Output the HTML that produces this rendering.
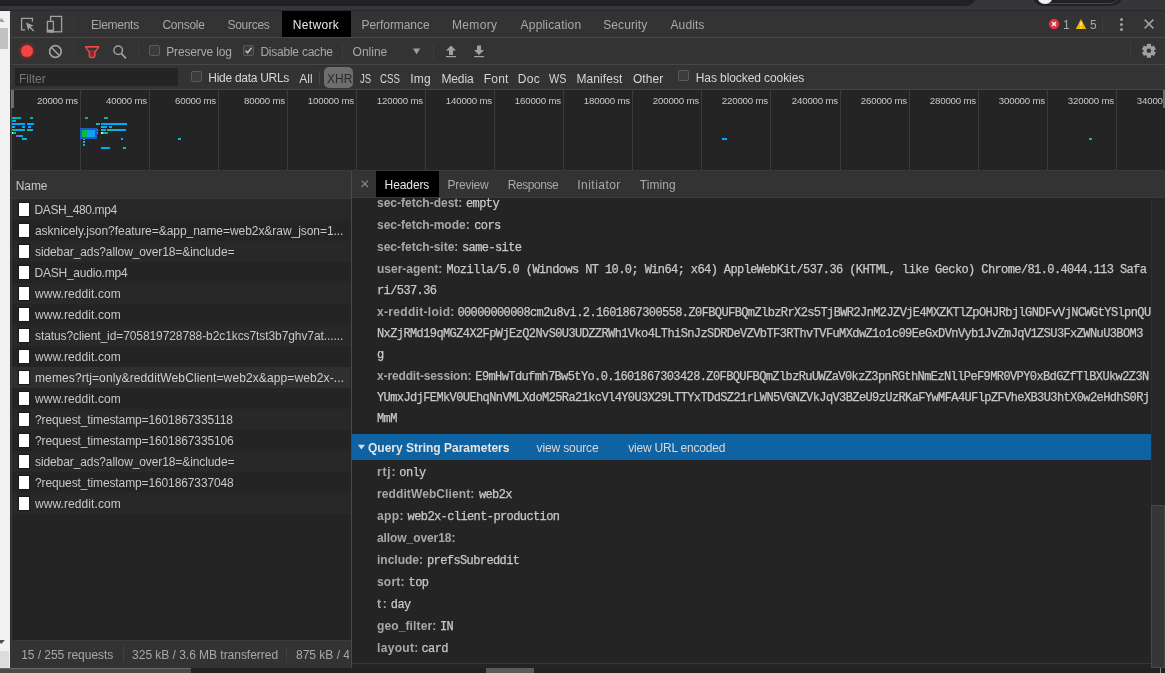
<!DOCTYPE html>
<html><head><meta charset="utf-8">
<style>
*{box-sizing:border-box;margin:0;padding:0}
html,body{width:1165px;height:673px;overflow:hidden;background:#333;font-family:"Liberation Sans",sans-serif;font-size:12px;color:#a8a8a8}
.a{position:absolute}
.t{position:absolute;white-space:nowrap;line-height:16px}
.mono{font-family:"Liberation Mono",monospace;letter-spacing:-0.6px;-webkit-text-stroke:0.25px #c8c8c8}
.ovl{text-align:right;font-size:9.7px;letter-spacing:-0.2px;color:#c8c8c8}
.hd{color:#c8c8c8}.hd b{color:#a8a8a8}
</style></head><body><div id="root" style="position:absolute;left:0;top:0;width:1165px;height:673px;overflow:hidden;background:#333;will-change:transform">
<!-- top strip -->
<div class="a" style="left:0;top:0;width:1165px;height:10px;background:#35363a"></div>
<div class="a" style="left:-20px;top:-10px;width:996px;height:15.5px;background:#202124;border-radius:0 0 10px 0"></div>
<div class="a" style="left:1033px;top:-15px;width:89px;height:20.5px;background:#202124;border-radius:10px"></div>
<div class="a" style="left:1039px;top:-15px;width:80px;height:18.5px;border:1px solid #44454a;border-radius:9px"></div>
<div class="a" style="left:1036.5px;top:-12.5px;width:16px;height:16px;background:#f1f1f1;border-radius:50%"></div>
<div class="a" style="left:0;top:10px;width:1165px;height:1px;background:#28292b"></div>

<!-- left page scrollbar -->
<div class="a" style="left:0;top:11px;width:10px;height:657px;background:#f1f1f1"></div>
<div class="a" style="left:0;top:28px;width:8px;height:21px;background:#c1c1c1"></div>
<svg class="a" style="left:0;top:11px" width="10" height="657"><polygon points="-2.3,11 1.3,7 4.9,11" fill="#a3a3a3"/><polygon points="-2.3,629 1.3,633 4.9,629" fill="#505050"/><rect x="0" y="640" width="9" height="17" fill="#dcdcdc"/></svg>
<div class="a" style="left:10px;top:11px;width:1px;height:657px;background:#2e2e2e"></div>
<div class="a" style="left:11px;top:11px;width:1px;height:657px;background:#393939"></div>

<!-- bottom page scrollbar -->
<div class="a" style="left:0;top:668px;width:1165px;height:5px;background:#4a4a4a;border-top:1px solid #6a6a6a"></div>


<!-- devtools main tab bar -->
<div class="a" style="left:11px;top:37px;width:1154px;height:1px;background:#474747"></div>
<svg class="a" style="left:11px;top:11px" width="80" height="26">
 <path d="M14.2,18.8 H10.6 V7.4 H21.4 V10.8" fill="none" stroke="#a0a0a0" stroke-width="1.3"/>
 <path d="M15,11.6 L22.6,14.4 L19.6,15.8 L23.2,19.4 L22.2,20.4 L18.6,16.8 L17.2,19.6 Z" fill="#a0a0a0"/>
 <rect x="39.6" y="5.4" width="11" height="15.4" fill="none" stroke="#a0a0a0" stroke-width="1.3"/>
 <rect x="36.4" y="10.4" width="6" height="10.4" fill="#333" stroke="#a0a0a0" stroke-width="1.3"/>
 <rect x="35.8" y="18.6" width="7.2" height="2.8" fill="#a0a0a0"/>
 <rect x="62.2" y="5" width="1" height="16" fill="#3e3e3e"/>
</svg>
<div class="t" style="left:91.0px;top:17px;letter-spacing:-0.27px">Elements</div>
<div class="t" style="left:162.4px;top:17px;letter-spacing:-0.25px">Console</div>
<div class="t" style="left:227.5px;top:17px;letter-spacing:-0.28px">Sources</div>
<div class="a" style="left:282px;top:11px;width:69px;height:26px;background:#000"></div>
<div class="t" style="left:292.7px;top:17px;color:#e8e8e8;letter-spacing:0.35px">Network</div>
<div class="t" style="left:361.5px;top:17px;letter-spacing:-0.06px">Performance</div>
<div class="t" style="left:451.9px;top:17px;letter-spacing:0.36px">Memory</div>
<div class="t" style="left:520.6px;top:17px;letter-spacing:0.18px">Application</div>
<div class="t" style="left:603.3px;top:17px;letter-spacing:0.07px">Security</div>
<div class="t" style="left:670.5px;top:17px;letter-spacing:0.10px">Audits</div>
<svg class="a" style="left:1040px;top:11px" width="125" height="26">
 <circle cx="14" cy="13" r="5.2" fill="#e0313f"/>
 <path d="M12,11 L16,15 M16,11 L12,15" stroke="#fff" stroke-width="1.2"/>
 <path d="M41,8 L46.2,18 L35.8,18 Z" fill="#f2b600"/>
 <rect x="40.5" y="11.2" width="1.1" height="3.8" fill="#fff"/><rect x="40.5" y="16" width="1.1" height="1.1" fill="#fff"/>
 <rect x="62" y="5" width="1" height="16" fill="#3e3e3e"/>
 <circle cx="81.5" cy="8.6" r="1.5" fill="#a0a0a0"/><circle cx="81.5" cy="13.5" r="1.5" fill="#a0a0a0"/><circle cx="81.5" cy="18.4" r="1.5" fill="#a0a0a0"/>
 <path d="M104.6,8.6 L113.4,17.4 M113.4,8.6 L104.6,17.4" stroke="#a0a0a0" stroke-width="1.5"/>
</svg>
<div class="t" style="left:1063px;top:17px">1</div>
<div class="t" style="left:1090px;top:17px">5</div>

<!-- second toolbar -->
<div class="a" style="left:11px;top:64px;width:1154px;height:1px;background:#474747"></div>
<svg class="a" style="left:11px;top:38px" width="140" height="26">
 <defs><filter id="gl" x="-1" y="-1" width="3" height="3"><feGaussianBlur stdDeviation="1.5"/></filter></defs><circle cx="16" cy="13" r="7.6" fill="#b02020" opacity="0.6" filter="url(#gl)"/>
 <circle cx="16" cy="13" r="6" fill="#f44545"/>
 <circle cx="44.4" cy="13.5" r="5.8" fill="none" stroke="#a0a0a0" stroke-width="1.7"/>
 <path d="M40.4,9.5 L48.4,17.5" stroke="#a0a0a0" stroke-width="1.7"/>
 <rect x="62.2" y="5" width="1" height="16" fill="#3e3e3e"/>
 <path d="M74.6,8.8 H87.6 L83.8,14.4 V18.2 Q83.8,19.6 82.4,19.6 H79.8 Q78.4,19.6 78.4,18.2 V14.4 Z" fill="#7e3030" stroke="#f24848" stroke-width="1.5" stroke-linejoin="round"/>
 <path d="M76.2,10 H86 L84.4,12 H77.8 Z" fill="#333"/>
 <circle cx="107.2" cy="12.2" r="4.3" fill="none" stroke="#a0a0a0" stroke-width="1.5"/>
 <path d="M110.4,15.7 L115,20.3" stroke="#a0a0a0" stroke-width="1.8"/>
 <rect x="127.2" y="5" width="1" height="16" fill="#3e3e3e"/>
</svg>
<div class="a" style="left:149px;top:45px;width:11px;height:11px;border:1px solid #5a5a5a;border-radius:2px;background:#3b3b3b"></div>
<div class="t" style="left:166.2px;top:44px;letter-spacing:-0.14px">Preserve log</div>
<div class="a" style="left:243px;top:45px;width:11px;height:11px;border:1px solid #5a5a5a;border-radius:2px;background:#3b3b3b"></div>
<svg class="a" style="left:243px;top:45px" width="11" height="11"><path d="M2.6,5.6 L4.6,7.8 L8.6,2.8" fill="none" stroke="#b8b8b8" stroke-width="1.6"/></svg>
<div class="t" style="left:260.4px;top:44px;letter-spacing:-0.23px">Disable cache</div>
<div class="a" style="left:342px;top:43px;width:1px;height:16px;background:#3e3e3e"></div>
<div class="t" style="left:352.6px;top:44px;letter-spacing:0.00px">Online</div>
<svg class="a" style="left:412px;top:47px" width="10" height="8"><path d="M1,1.4 H8.2 L4.6,7.2 Z" fill="#a0a0a0"/></svg>
<div class="a" style="left:433px;top:43px;width:1px;height:16px;background:#3e3e3e"></div>
<svg class="a" style="left:440px;top:40px" width="50" height="22">
 <path d="M11,5.5 L16,10.5 H13 V15 H9 V10.5 H6 Z" fill="#a0a0a0"/><rect x="6" y="16" width="10" height="1.2" fill="#a0a0a0"/>
 <path d="M39,15 L34,10 H37 V5.5 H41 V10 H44 Z" fill="#a0a0a0"/><rect x="34" y="16" width="10" height="1.2" fill="#a0a0a0"/>
</svg>
<div class="a" style="left:1130px;top:43px;width:1px;height:16px;background:#3e3e3e"></div>
<svg class="a" style="left:1140px;top:42px" width="18" height="18">
 <g transform="translate(8.9,8.8)" fill="#a0a0a0">
  <circle r="5.3"/>
  <rect x="-2.1" y="-6.9" width="4.2" height="13.8"/>
  <rect x="-2.1" y="-6.9" width="4.2" height="13.8" transform="rotate(60)"/>
  <rect x="-2.1" y="-6.9" width="4.2" height="13.8" transform="rotate(120)"/>
  <circle r="2.3" fill="#333"/>
 </g>
</svg>

<!-- filter bar -->
<div class="a" style="left:11px;top:89px;width:1154px;height:1px;background:#474747"></div>
<div class="a" style="left:15px;top:68px;width:163px;height:18px;background:#242424"></div>
<div class="t" style="left:19px;top:71px;color:#777">Filter</div>
<div class="a" style="left:191px;top:71px;width:11px;height:11px;border:1px solid #5a5a5a;border-radius:2px;background:#3b3b3b"></div>
<div class="t" style="left:208.3px;top:70px;color:#d6d6d6;letter-spacing:-0.28px">Hide data URLs</div>
<div class="t" style="left:299.3px;top:71px;color:#d6d6d6;letter-spacing:0.00px">All</div>
<div class="a" style="left:319px;top:71px;width:1px;height:14px;background:#454545"></div>
<div class="a" style="left:324px;top:67px;width:29px;height:21px;background:#6e6e6e;border-radius:5px"></div>
<div class="t" style="left:327px;top:71px;color:#2a2a2a">XHR</div>
<div class="t" style="left:359.5px;top:71px;color:#d6d6d6;transform:scaleX(0.8);transform-origin:0 0">JS</div>
<div class="t" style="left:380.3px;top:71px;color:#d6d6d6;transform:scaleX(0.81);transform-origin:0 0">CSS</div>
<div class="t" style="left:410.2px;top:71px;color:#d6d6d6;letter-spacing:0.25px">Img</div>
<div class="t" style="left:441.4px;top:71px;color:#d6d6d6;letter-spacing:-0.10px">Media</div>
<div class="t" style="left:483.8px;top:71px;color:#d6d6d6;letter-spacing:0.17px">Font</div>
<div class="t" style="left:517.7px;top:71px;color:#d6d6d6;letter-spacing:0.30px">Doc</div>
<div class="t" style="left:548.7px;top:71px;color:#d6d6d6;transform:scaleX(0.9);transform-origin:0 0">WS</div>
<div class="t" style="left:576.4px;top:71px;color:#d6d6d6;letter-spacing:0.10px">Manifest</div>
<div class="t" style="left:632.9px;top:71px;color:#d6d6d6;letter-spacing:0.08px">Other</div>
<div class="a" style="left:678px;top:70px;width:11px;height:11px;border:1px solid #5a5a5a;border-radius:2px;background:#3b3b3b"></div>
<div class="t" style="left:695.8px;top:70px;color:#d6d6d6;letter-spacing:-0.09px">Has blocked cookies</div>

<!-- overview -->
<div class="a" style="left:12px;top:90px;width:1153px;height:80px;background:#242424;overflow:hidden">
<div class="a" style="left:68px;top:0;width:1px;height:80px;background:#3a3a3a"></div>
<div class="t ovl" style="left:-2px;top:3px;width:68px">20000 ms</div>
<div class="a" style="left:137px;top:0;width:1px;height:80px;background:#3a3a3a"></div>
<div class="t ovl" style="left:67px;top:3px;width:68px">40000 ms</div>
<div class="a" style="left:206px;top:0;width:1px;height:80px;background:#3a3a3a"></div>
<div class="t ovl" style="left:136px;top:3px;width:68px">60000 ms</div>
<div class="a" style="left:275px;top:0;width:1px;height:80px;background:#3a3a3a"></div>
<div class="t ovl" style="left:205px;top:3px;width:68px">80000 ms</div>
<div class="a" style="left:344px;top:0;width:1px;height:80px;background:#3a3a3a"></div>
<div class="t ovl" style="left:274px;top:3px;width:68px">100000 ms</div>
<div class="a" style="left:413px;top:0;width:1px;height:80px;background:#3a3a3a"></div>
<div class="t ovl" style="left:343px;top:3px;width:68px">120000 ms</div>
<div class="a" style="left:482px;top:0;width:1px;height:80px;background:#3a3a3a"></div>
<div class="t ovl" style="left:412px;top:3px;width:68px">140000 ms</div>
<div class="a" style="left:551px;top:0;width:1px;height:80px;background:#3a3a3a"></div>
<div class="t ovl" style="left:481px;top:3px;width:68px">160000 ms</div>
<div class="a" style="left:620px;top:0;width:1px;height:80px;background:#3a3a3a"></div>
<div class="t ovl" style="left:550px;top:3px;width:68px">180000 ms</div>
<div class="a" style="left:689px;top:0;width:1px;height:80px;background:#3a3a3a"></div>
<div class="t ovl" style="left:619px;top:3px;width:68px">200000 ms</div>
<div class="a" style="left:758px;top:0;width:1px;height:80px;background:#3a3a3a"></div>
<div class="t ovl" style="left:688px;top:3px;width:68px">220000 ms</div>
<div class="a" style="left:828px;top:0;width:1px;height:80px;background:#3a3a3a"></div>
<div class="t ovl" style="left:758px;top:3px;width:68px">240000 ms</div>
<div class="a" style="left:897px;top:0;width:1px;height:80px;background:#3a3a3a"></div>
<div class="t ovl" style="left:827px;top:3px;width:68px">260000 ms</div>
<div class="a" style="left:966px;top:0;width:1px;height:80px;background:#3a3a3a"></div>
<div class="t ovl" style="left:896px;top:3px;width:68px">280000 ms</div>
<div class="a" style="left:1035px;top:0;width:1px;height:80px;background:#3a3a3a"></div>
<div class="t ovl" style="left:965px;top:3px;width:68px">300000 ms</div>
<div class="a" style="left:1104px;top:0;width:1px;height:80px;background:#3a3a3a"></div>
<div class="t ovl" style="left:1034px;top:3px;width:68px">320000 ms</div>
<div class="a" style="left:0px;top:27px;width:9px;height:2px;background:linear-gradient(90deg,#00c060,#00b0e0,#00c060,#00a8f0)"></div>
<div class="a" style="left:18px;top:27px;width:3px;height:2px;background:linear-gradient(90deg,#00c060,#00b0e0,#00c060,#00a8f0)"></div>
<div class="a" style="left:0px;top:30px;width:4px;height:2px;background:#00a8ff"></div>
<div class="a" style="left:0px;top:33px;width:13px;height:2px;background:#00a8ff"></div>
<div class="a" style="left:15px;top:33px;width:7px;height:2px;background:#00a8ff"></div>
<div class="a" style="left:0px;top:36px;width:3px;height:2px;background:linear-gradient(90deg,#20c0a0,#00a8ff)"></div>
<div class="a" style="left:10px;top:36px;width:3px;height:2px;background:#00a8ff"></div>
<div class="a" style="left:16px;top:36px;width:3px;height:2px;background:#00a8ff"></div>
<div class="a" style="left:0px;top:39px;width:13px;height:2px;background:linear-gradient(90deg,#00c060,#00a8ff 40%,#00b8d0)"></div>
<div class="a" style="left:15px;top:39px;width:6px;height:2px;background:linear-gradient(90deg,#20c0a0,#00a8ff)"></div>
<div class="a" style="left:0px;top:42px;width:4px;height:2px;background:linear-gradient(90deg,#e0e0e0 20%,#00c060 40%,#00b0e0)"></div>
<div class="a" style="left:4px;top:45px;width:7px;height:2px;background:linear-gradient(90deg,#808080,#a040e0 25%,#00a8ff 50%)"></div>
<div class="a" style="left:10px;top:48px;width:5px;height:2px;background:linear-gradient(90deg,#20c0a0,#00a8ff)"></div>
<div class="a" style="left:73px;top:27px;width:3px;height:2px;background:linear-gradient(90deg,#00c060,#00b0e0,#00c060,#00a8f0)"></div>
<div class="a" style="left:92px;top:27px;width:4px;height:2px;background:linear-gradient(90deg,#00c060,#00b0e0,#00c060,#00a8f0)"></div>
<div class="a" style="left:84px;top:33px;width:4px;height:2px;background:linear-gradient(90deg,#20c0a0,#00a8ff)"></div>
<div class="a" style="left:89px;top:33px;width:26px;height:2px;background:#00a8ff"></div>
<div class="a" style="left:89px;top:36px;width:6px;height:2px;background:linear-gradient(90deg,#20c0a0,#00a8ff)"></div>
<div class="a" style="left:97px;top:36px;width:3px;height:2px;background:#00a8ff"></div>
<div class="a" style="left:84px;top:39px;width:2px;height:2px;background:linear-gradient(90deg,#20c0a0,#00a8ff)"></div>
<div class="a" style="left:89px;top:39px;width:5px;height:2px;background:#00a8ff"></div>
<div class="a" style="left:95px;top:39px;width:19px;height:2px;background:linear-gradient(90deg,#20c0a0,#00a8ff)"></div>
<div class="a" style="left:84px;top:42px;width:2px;height:2px;background:linear-gradient(90deg,#20c0a0,#00a8ff)"></div>
<div class="a" style="left:89px;top:42px;width:7px;height:2px;background:linear-gradient(90deg,#e0e0e0 20%,#00c060 40%,#00b0e0)"></div>
<div class="a" style="left:71px;top:48px;width:2px;height:2px;background:linear-gradient(90deg,#20c0a0,#00a8ff)"></div>
<div class="a" style="left:71px;top:51px;width:2px;height:2px;background:linear-gradient(90deg,#20c0a0,#00a8ff)"></div>
<div class="a" style="left:71px;top:54px;width:2px;height:2px;background:linear-gradient(90deg,#20c0a0,#00a8ff)"></div>
<div class="a" style="left:109px;top:48px;width:2px;height:2px;background:linear-gradient(90deg,#20c0a0,#00a8ff)"></div>
<div class="a" style="left:89px;top:57px;width:9px;height:2px;background:#00a8ff"></div>
<div class="a" style="left:111px;top:57px;width:3px;height:2px;background:linear-gradient(90deg,#20c0a0,#00a8ff)"></div>
<div class="a" style="left:166px;top:48px;width:3px;height:2px;background:linear-gradient(90deg,#20c0a0,#00a8ff)"></div>
<div class="a" style="left:710px;top:48px;width:5px;height:2px;background:#00a8ff"></div>
<div class="a" style="left:1077px;top:48px;width:3px;height:2px;background:linear-gradient(90deg,#20c0a0,#00a8ff)"></div>
<div class="t ovl" style="left:1103px;top:3px;width:68px">340000 ms</div>
<div class="a" style="left:68px;top:38px;width:17px;height:11px;background:#1e5ccc"></div>
<div class="a" style="left:70px;top:40px;width:13px;height:7px;background:linear-gradient(90deg,#00c040 40%,#10a0f0 40%)"></div>

<div class="a" style="left:0;top:0;width:1.5px;height:18px;background:#6a6a6a"></div>
<div class="a" style="left:1151px;top:0;width:2px;height:18px;background:#6a6a6a"></div>
</div>
<div class="a" style="left:12px;top:170px;width:1153px;height:1px;background:#3a3a3a"></div>
<div class="a" style="left:11px;top:90px;width:1px;height:80px;background:#4a4a4a"></div>
<div class="a" style="left:11px;top:90px;width:1px;height:18px;background:#777"></div>
<!-- request list -->
<div class="a" style="left:12px;top:171px;width:339px;height:27px;background:#333"></div>
<div class="t" style="left:15.8px;top:178px;color:#c8c8c8;letter-spacing:-0.10px">Name</div>
<div class="a" style="left:12px;top:198px;width:339px;height:1px;background:#3a3a3a"></div>
<div class="a" style="left:12px;top:199px;width:339px;height:441px;background:#242424"></div>
<div class="a" style="left:12px;top:199px;width:339px;height:315px;background:#282828"></div>
<div class="a" style="left:18px;top:202px;width:12px;height:15px;background:#fff;border:1px solid #1a1a1a"></div>
<div class="t" style="left:34.5px;top:202px;color:#c8c8c8;letter-spacing:-0.37px">DASH_480.mp4</div>
<div class="a" style="left:12px;top:220px;width:339px;height:21px;background:#242424"></div>
<div class="a" style="left:18px;top:223px;width:12px;height:15px;background:#fff;border:1px solid #1a1a1a"></div>
<div class="t" style="left:35.0px;top:223px;color:#c8c8c8;letter-spacing:-0.05px">asknicely.json?feature=&amp;app_name=web2x&amp;raw_json=1...</div>
<div class="a" style="left:18px;top:244px;width:12px;height:15px;background:#fff;border:1px solid #1a1a1a"></div>
<div class="t" style="left:35.0px;top:244px;color:#c8c8c8;letter-spacing:-0.10px">sidebar_ads?allow_over18=&amp;include=</div>
<div class="a" style="left:12px;top:262px;width:339px;height:21px;background:#242424"></div>
<div class="a" style="left:18px;top:265px;width:12px;height:15px;background:#fff;border:1px solid #1a1a1a"></div>
<div class="t" style="left:34.5px;top:265px;color:#c8c8c8;letter-spacing:-0.23px">DASH_audio.mp4</div>
<div class="a" style="left:18px;top:286px;width:12px;height:15px;background:#fff;border:1px solid #1a1a1a"></div>
<div class="t" style="left:35.0px;top:286px;color:#c8c8c8;letter-spacing:0.08px">www.reddit.com</div>
<div class="a" style="left:12px;top:304px;width:339px;height:21px;background:#242424"></div>
<div class="a" style="left:18px;top:307px;width:12px;height:15px;background:#fff;border:1px solid #1a1a1a"></div>
<div class="t" style="left:35.0px;top:307px;color:#c8c8c8;letter-spacing:0.08px">www.reddit.com</div>
<div class="a" style="left:18px;top:328px;width:12px;height:15px;background:#fff;border:1px solid #1a1a1a"></div>
<div class="t" style="left:35.0px;top:328px;color:#c8c8c8;letter-spacing:-0.09px">status?client_id=705819728788-b2c1kcs7tst3b7ghv7at......</div>
<div class="a" style="left:12px;top:346px;width:339px;height:21px;background:#242424"></div>
<div class="a" style="left:18px;top:349px;width:12px;height:15px;background:#fff;border:1px solid #1a1a1a"></div>
<div class="t" style="left:35.0px;top:349px;color:#c8c8c8;letter-spacing:0.08px">www.reddit.com</div>
<div class="a" style="left:18px;top:370px;width:12px;height:15px;background:#fff;border:1px solid #1a1a1a"></div>
<div class="a" style="left:12px;top:367px;width:338px;height:21px;background:#2f2f2f"></div>
<div class="a" style="left:18px;top:370px;width:12px;height:15px;background:#fff;border:1px solid #1a1a1a"></div>
<div class="t" style="left:35.0px;top:370px;color:#d0d0d0;letter-spacing:0.11px">memes?rtj=only&amp;redditWebClient=web2x&amp;app=web2x-...</div>
<div class="a" style="left:12px;top:388px;width:339px;height:21px;background:#242424"></div>
<div class="a" style="left:18px;top:391px;width:12px;height:15px;background:#fff;border:1px solid #1a1a1a"></div>
<div class="t" style="left:35.0px;top:391px;color:#c8c8c8;letter-spacing:0.08px">www.reddit.com</div>
<div class="a" style="left:18px;top:412px;width:12px;height:15px;background:#fff;border:1px solid #1a1a1a"></div>
<div class="t" style="left:35.0px;top:412px;color:#c8c8c8;letter-spacing:-0.12px">?request_timestamp=1601867335118</div>
<div class="a" style="left:12px;top:430px;width:339px;height:21px;background:#242424"></div>
<div class="a" style="left:18px;top:433px;width:12px;height:15px;background:#fff;border:1px solid #1a1a1a"></div>
<div class="t" style="left:35.0px;top:433px;color:#c8c8c8;letter-spacing:-0.12px">?request_timestamp=1601867335106</div>
<div class="a" style="left:18px;top:454px;width:12px;height:15px;background:#fff;border:1px solid #1a1a1a"></div>
<div class="t" style="left:35.0px;top:454px;color:#c8c8c8;letter-spacing:-0.10px">sidebar_ads?allow_over18=&amp;include=</div>
<div class="a" style="left:12px;top:472px;width:339px;height:21px;background:#242424"></div>
<div class="a" style="left:18px;top:475px;width:12px;height:15px;background:#fff;border:1px solid #1a1a1a"></div>
<div class="t" style="left:35.0px;top:475px;color:#c8c8c8;letter-spacing:-0.12px">?request_timestamp=1601867337048</div>
<div class="a" style="left:18px;top:496px;width:12px;height:15px;background:#fff;border:1px solid #1a1a1a"></div>
<div class="t" style="left:35.0px;top:496px;color:#c8c8c8;letter-spacing:0.08px">www.reddit.com</div>
<!-- status bar -->
<div class="a" style="left:12px;top:640px;width:339px;height:28px;background:#333;border-top:1px solid #3a3a3a"></div>
<div class="t" style="left:21.2px;top:647px;letter-spacing:-0.04px">15 / 255 requests</div>
<div class="a" style="left:123px;top:646px;width:1px;height:16px;background:#404040"></div>
<div class="t" style="left:132.1px;top:647px;letter-spacing:-0.03px">325 kB / 3.6 MB transferred</div>
<div class="a" style="left:286px;top:646px;width:1px;height:16px;background:#404040"></div>
<div class="t" style="left:296px;top:647px;width:53px;overflow:hidden">875 kB / 4.0 MB resources</div>
<div class="a" style="left:351px;top:171px;width:1px;height:497px;background:#4a4a4a"></div>
<!-- details -->
<div class="a" style="left:352px;top:171px;width:813px;height:26px;background:#333"></div>
<div class="a" style="left:352px;top:197px;width:813px;height:1px;background:#3a3a3a"></div>
<svg class="a" style="left:359px;top:178px" width="12" height="12"><path d="M2.6,2.6 L9,9 M9,2.6 L2.6,9" stroke="#8a8a8a" stroke-width="1.1"/></svg>
<div class="a" style="left:376px;top:171px;width:63px;height:26px;background:#000"></div>
<div class="t" style="left:384.6px;top:177px;color:#e8e8e8;letter-spacing:-0.10px">Headers</div>
<div class="t" style="left:447.5px;top:177px;letter-spacing:-0.25px">Preview</div>
<div class="t" style="left:507.8px;top:177px;letter-spacing:-0.46px">Response</div>
<div class="t" style="left:577.3px;top:177px;letter-spacing:0.46px">Initiator</div>
<div class="t" style="left:639.7px;top:177px;letter-spacing:0.10px">Timing</div>
<div class="a" style="left:352px;top:198px;width:799px;height:465px;background:#242424;overflow:hidden">
<div class="t hd" style="left:25px;top:-3px"><b>sec-fetch-dest:</b></div><div class="t hd" style="left:114px;top:-3px"><span class="mono">empty</span></div>
<div class="t hd" style="left:25px;top:19px"><b>sec-fetch-mode:</b></div><div class="t hd" style="left:122.19999999999999px;top:19px"><span class="mono">cors</span></div>
<div class="t hd" style="left:25px;top:41px"><b>sec-fetch-site:</b></div><div class="t hd" style="left:110px;top:41px"><span class="mono">same-site</span></div>
<div class="t hd" style="left:25px;top:63px"><b>user-agent:</b></div><div class="t hd" style="left:94.60000000000002px;top:63px"><span class="mono">Mozilla/5.0 (Windows NT 10.0; Win64; x64) AppleWebKit/537.36 (KHTML, like Gecko) Chrome/81.0.4044.113 Safa</span></div>
<div class="t hd" style="left:25px;top:84px"><span class="mono">ri/537.36</span></div>
<div class="t hd" style="left:25px;top:106px"><b style="letter-spacing:0.308px">x-reddit-loid:</b></div><div class="t hd" style="left:105.39999999999998px;top:106px"><span class="mono">00000000008cm2u8vi.2.1601867300558.Z0FBQUFBQmZlbzRrX2s5TjBWR2JnM2JZVjE4MXZKTlZpOHJRbjlGNDFvVjNCWGtYSlpnQU</span></div>
<div class="t hd" style="left:25px;top:127px"><span class="mono">NxZjRMd19qMGZ4X2FpWjEzQ2NvS0U3UDZZRWh1Vko4LThiSnJzSDRDeVZVbTF3RThvTVFuMXdwZ1o1c09EeGxDVnVyb1JvZmJqV1ZSU3FxZWNuU3BOM3</span></div>
<div class="t hd" style="left:25px;top:148px"><span class="mono">g</span></div>
<div class="t hd" style="left:25px;top:170px"><b style="letter-spacing:-0.137px">x-reddit-session:</b></div><div class="t hd" style="left:123.30000000000001px;top:170px"><span class="mono">E9mHwTdufmh7Bw5tYo.0.1601867303428.Z0FBQUFBQmZlbzRuUWZaV0kzZ3pnRGthNmEzNllPeF9MR0VPY0xBdGZfTlBXUkw2Z3N</span></div>
<div class="t hd" style="left:25px;top:191px"><span class="mono">YUmxJdjFEMkV0UEhqNnVMLXdoM25Ra21kcVl4Y0U3X29LTTYxTDdSZ21rLWN5VGNZVkJqV3BZeU9zUzRKaFYwMFA4UFlpZFVheXB3U3htX0w2eHdhS0Rj</span></div>
<div class="t hd" style="left:25px;top:212px"><span class="mono">MmM</span></div>
<div class="a" style="left:0;top:236px;width:799px;height:26px;background:#1063a3"></div>
<svg class="a" style="left:5px;top:246px" width="10" height="8"><path d="M0.8,0.8 H8 L4.4,5.6 Z" fill="#dcdcdc"/></svg>
<div class="t" style="left:16px;top:242px;color:#e4e4e4;font-weight:bold">Query String Parameters</div>
<div class="t" style="left:184.6px;top:242px;color:#d8d8d8;letter-spacing:-0.14px">view source</div>
<div class="t" style="left:276.2px;top:242px;color:#d8d8d8;letter-spacing:-0.21px">view URL encoded</div>
<div class="t hd" style="left:25px;top:266px"><b style="letter-spacing:0.800px">rtj:</b></div><div class="t hd" style="left:47.30000000000001px;top:266px"><span class="mono">only</span></div>
<div class="t hd" style="left:25px;top:288px"><b style="letter-spacing:0.100px">redditWebClient:</b></div><div class="t hd" style="left:126.89999999999998px;top:288px"><span class="mono">web2x</span></div>
<div class="t hd" style="left:25px;top:310px"><b style="letter-spacing:0.367px">app:</b></div><div class="t hd" style="left:55.60000000000002px;top:310px"><span class="mono">web2x-client-production</span></div>
<div class="t hd" style="left:25px;top:332px"><b style="letter-spacing:-0.083px">allow_over18:</b></div>
<div class="t hd" style="left:25px;top:354px"><b>include:</b></div><div class="t hd" style="left:75px;top:354px"><span class="mono">prefsSubreddit</span></div>
<div class="t hd" style="left:25px;top:376px"><b style="letter-spacing:0.200px">sort:</b></div><div class="t hd" style="left:56.60000000000002px;top:376px"><span class="mono">top</span></div>
<div class="t hd" style="left:25px;top:398px"><b style="letter-spacing:1.800px">t:</b></div><div class="t hd" style="left:38.80000000000001px;top:398px"><span class="mono">day</span></div>
<div class="t hd" style="left:25px;top:420px"><b style="letter-spacing:0.120px">geo_filter:</b></div><div class="t hd" style="left:88px;top:420px"><span class="mono">IN</span></div>
<div class="t hd" style="left:25px;top:442px"><b style="letter-spacing:0.317px">layout:</b></div><div class="t hd" style="left:69.5px;top:442px"><span class="mono">card</span></div>
</div>
<div class="a" style="left:352px;top:663px;width:799px;height:1px;background:#383838"></div>
<div class="a" style="left:352px;top:664px;width:799px;height:4px;background:#242424"></div>
<div class="a" style="left:1151px;top:198px;width:14px;height:470px;background:#262626;border-left:1px solid #2e2e2e"></div>
<div class="a" style="left:1151px;top:505px;width:14px;height:163px;background:#363636;border:1px solid #484848"></div>
<div class="a" style="left:191px;top:668px;width:974px;height:5px;background:#222"></div>
<div class="a" style="left:486px;top:668px;width:48px;height:5px;background:#5a5a5a"></div>
<div class="a" style="left:1160px;top:668px;width:1px;height:5px;background:#8a8a8a"></div>
</div></body></html>
